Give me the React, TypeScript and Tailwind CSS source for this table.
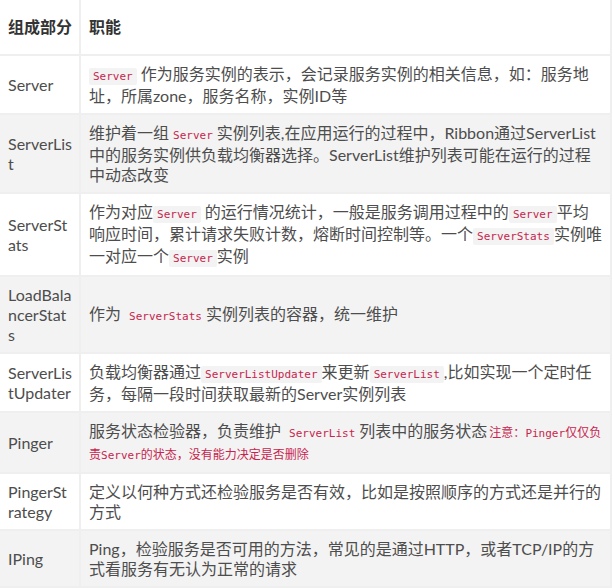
import type { ReactNode } from "react"

interface Row {
  name: string[]
  desc: ReactNode
}

function Code({ children, className = "px-[4px]" }: { children: ReactNode; className?: string }) {
  return (
    <code
      className={`rounded-[2px] bg-[#f3f3f3] py-[2px] text-[11px] leading-[18px] text-[#c7254e] ${className}`}
      style={{ fontFamily: '"DejaVu Sans Mono", "Noto Sans CJK SC", monospace' }}
    >
      {children}
    </code>
  )
}

// 第一列按参考图的断行方式拆开
const rows: Row[] = [
  {
    name: ["Server"],
    desc: (
      <>
        <Code>Server</Code> 作为服务实例的表示，会记录服务实例的相关信息，如：服务地址，所属zone，服务名称，实例ID等
      </>
    ),
  },
  {
    name: ["ServerLis", "t"],
    desc: (
      <>
        维护着一组<Code>Server</Code>实例列表,在应用运行的过程中，Ribbon通过ServerList中的服务实例供负载均衡器选择。ServerList维护列表可能在运行的过程中动态改变
      </>
    ),
  },
  {
    name: ["ServerSt", "ats"],
    desc: (
      <>
        作为对应<Code>Server</Code> 的运行情况统计，一般是服务调用过程中的<Code>Server</Code>平均响应时间，累计请求失败计数，熔断时间控制等。一个<Code>ServerStats</Code>实例唯一对应一个<Code>Server</Code>实例
      </>
    ),
  },
  {
    name: ["LoadBala", "ncerStat", "s"],
    desc: (
      <>
        作为 <Code>ServerStats</Code>实例列表的容器，统一维护
      </>
    ),
  },
  {
    name: ["ServerLis", "tUpdater"],
    desc: (
      <>
        负载均衡器通过<Code>ServerListUpdater</Code>来更新<Code>ServerList</Code>,比如实现一个定时任务，每隔一段时间获取最新的Server实例列表
      </>
    ),
  },
  {
    name: ["Pinger"],
    desc: (
      <>
        服务状态检验器，负责维护 <Code>ServerList</Code>列表中的服务状态
        <Code className="px-[2px] text-[12px]">
          注意：<span className="text-[11px]">Pinger</span>仅仅负责<span className="text-[11px]">Server</span>的状态，没有能力决定是否删除
        </Code>
      </>
    ),
  },
  {
    name: ["PingerSt", "rategy"],
    desc: "定义以何种方式还检验服务是否有效，比如是按照顺序的方式还是并行的方式",
  },
  {
    name: ["IPing"],
    desc: "Ping，检验服务是否可用的方法，常见的是通过HTTP，或者TCP/IP的方式看服务有无认为正常的请求",
  },
]

export default function App() {
  return (
    <div
      className="min-h-[588px] w-[613px] bg-white text-[16px] leading-[20px] text-[#4d4d4d]"
      style={{ fontFamily: 'Lato, "Noto Sans CJK SC", sans-serif' }}
    >
      <table className="w-[612px] table-fixed border-collapse">
        <colgroup>
          <col className="w-[80px]" />
          <col />
        </colgroup>
        <thead>
          <tr>
            <th className="border-r-2 border-b-2 border-[#efefef] py-[17px] pr-1 pl-2 text-left align-middle font-bold whitespace-nowrap text-[#333]">
              组成部分
            </th>
            <th className="border-r-2 border-b-2 border-[#efefef] px-2 py-[17px] text-left align-middle font-bold text-[#333]">
              职能
            </th>
          </tr>
        </thead>
        <tbody>
          {rows.map((row, i) => (
            <tr key={row.name.join("")} className={i % 2 === 1 ? "bg-[#f3f3f3]" : "bg-white"}>
              <td className="border-r-2 border-b-2 border-[#efefef] pt-2 pr-1 pb-[7px] pl-2 align-middle">
                {row.name.map((part) => (
                  <div key={part}>{part}</div>
                ))}
              </td>
              <td className="border-r-2 border-b-2 border-[#efefef] px-2 pt-2 pb-[7px] align-middle">
                {row.desc}
              </td>
            </tr>
          ))}
        </tbody>
      </table>
    </div>
  )
}
